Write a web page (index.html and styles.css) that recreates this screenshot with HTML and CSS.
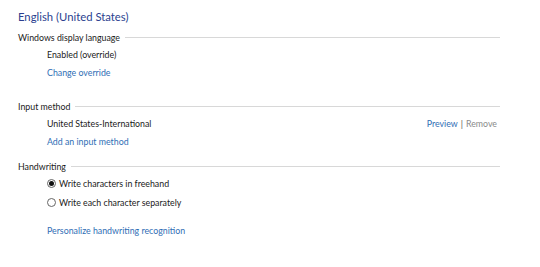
FILE: index.html
```html
<!DOCTYPE html>
<html>
<head>
<meta charset="utf-8">
<link rel="stylesheet" href="styles.css">
</head>
<body>
<div class="page">
  <h1 class="title">English (United States)</h1>

  <section class="group group-display">
    <div class="group-head"><span class="group-label">Windows display language</span><span class="rule"></span></div>
    <div class="group-body">
      <div class="row text">Enabled (override)</div>
      <div class="row"><a class="link">Change override</a></div>
    </div>
  </section>

  <section class="group group-input">
    <div class="group-head"><span class="group-label">Input method</span><span class="rule"></span></div>
    <div class="group-body">
      <div class="row text item-row"><span>United States-International</span><span class="actions"><a class="link">Preview</a><span class="sep">|</span><span class="disabled">Remove</span></span></div>
      <div class="row"><a class="link">Add an input method</a></div>
    </div>
  </section>

  <section class="group group-hand">
    <div class="group-head"><span class="group-label">Handwriting</span><span class="rule"></span></div>
    <div class="group-body">
      <label class="radio-row"><span class="radio checked"></span><span>Write characters in freehand</span></label>
      <label class="radio-row"><span class="radio"></span><span>Write each character separately</span></label>
      <div class="row personalize"><a class="link">Personalize handwriting recognition</a></div>
    </div>
  </section>
</div>
</body>
</html>
```
FILE: styles.css
```css
html, body {
  margin: 0;
  padding: 0;
  background: #ffffff;
}
body {
  font-family: Lato, "Noto Sans", sans-serif;
  font-size: 8.8px;
  color: #1a1a1a;
}
.page {
  padding: 8px 40px 0 18px;
  width: 482px;
}
.title {
  margin: 0;
  font-weight: normal;
  font-size: 11.3px;
  line-height: 18px;
  color: #2b3f8f;
}
.group-head {
  display: flex;
  align-items: center;
  height: 14px;
}
.group-label {
  white-space: nowrap;
  padding-right: 5px;
}
.rule {
  flex: 1;
  height: 1px;
  background: #d8d8d8;
}
.group-display { margin-top: 4px; }
.group-input { margin-top: 17px; }
.group-hand { margin-top: 8px; }
.group-body {
  padding-left: 29px;
  padding-top: 2px;
}
.group-hand .group-body { padding-top: 1px; }
.row {
  height: 18px;
  line-height: 18px;
}
.item-row {
  display: flex;
  justify-content: space-between;
  padding-right: 3px;
}
.link {
  color: #2f6eb5;
  cursor: pointer;
}
.actions .sep {
  color: #555;
  margin: 0 3px;
}
.disabled {
  color: #8a8a8a;
}
.radio-row {
  display: flex;
  align-items: center;
  height: 19px;
  gap: 3px;
}
.radio {
  box-sizing: border-box;
  width: 9px;
  height: 9px;
  border: 1px solid #666;
  border-radius: 50%;
  background: #fff;
  display: flex;
  align-items: center;
  justify-content: center;
}
.radio.checked::after {
  content: "";
  width: 5px;
  height: 5px;
  border-radius: 50%;
  background: #111;
}
.personalize {
  margin-top: 10px;
}
```
